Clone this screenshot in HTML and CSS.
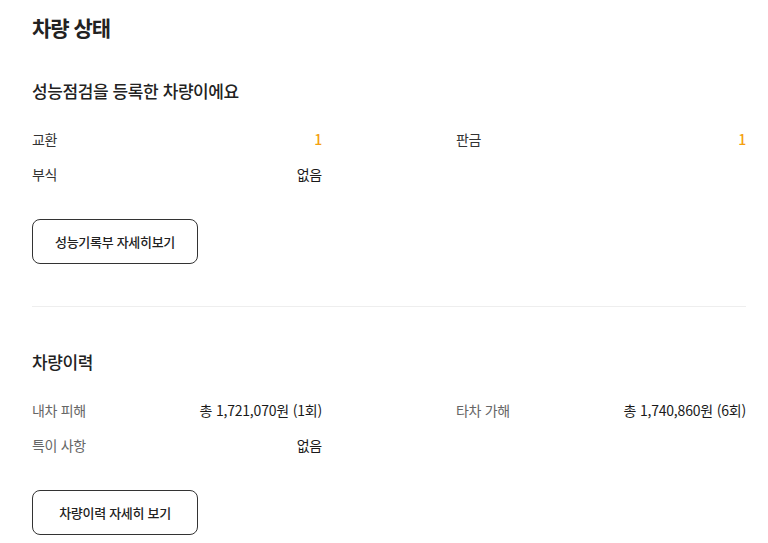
FILE: index.html
```html
<!DOCTYPE html>
<html lang="ko">
<head>
    <meta charset="UTF-8">
    <meta name="viewport" content="width=device-width, initial-scale=1.0">
    <title>차량 상태</title>
    <link rel="stylesheet" href="styles.css">
</head>
<body>
    <h1 class="page-title">차량 상태</h1>

    <section class="block">
        <h2 class="block-title">성능점검을 등록한 차량이에요</h2>
        <dl class="info-grid">
            <div class="info-row">
                <dt>교환</dt>
                <dd class="accent">1</dd>
            </div>
            <div class="info-row">
                <dt>판금</dt>
                <dd class="accent">1</dd>
            </div>
            <div class="info-row">
                <dt>부식</dt>
                <dd>없음</dd>
            </div>
        </dl>
        <button class="outline-btn">성능기록부 자세히보기</button>
    </section>

    <hr class="divider">

    <section class="block">
        <h2 class="block-title">차량이력</h2>
        <dl class="info-grid muted">
            <div class="info-row">
                <dt>내차 피해</dt>
                <dd>총 1,721,070원 (1회)</dd>
            </div>
            <div class="info-row">
                <dt>타차 가해</dt>
                <dd>총 1,740,860원 (6회)</dd>
            </div>
            <div class="info-row">
                <dt>특이 사항</dt>
                <dd>없음</dd>
            </div>
        </dl>
        <button class="outline-btn">차량이력 자세히 보기</button>
    </section>
</body>
</html>
```

FILE: styles.css
```css
body {
    font-family: "Noto Sans CJK KR", "Noto Sans", sans-serif;
    color: #222;
    margin: 0;
    padding: 11px 0 0 32px;
    width: 714px;
    background: #fff;
}
.page-title {
    font-size: 21px;
    font-weight: 700;
    line-height: 32px;
    margin: 0 0 35px;
    letter-spacing: -1px;
}
.block-title {
    font-size: 17px;
    font-weight: 500;
    line-height: 26px;
    margin: 0 0 25px;
    letter-spacing: -0.4px;
}
.info-grid {
    display: grid;
    grid-template-columns: 290px 290px;
    column-gap: 134px;
    row-gap: 14px;
    margin: 0 0 34px;
}
.info-row {
    display: flex;
    justify-content: space-between;
    font-size: 14px;
    line-height: 21px;
}
.info-row dt {
    color: #333;
    letter-spacing: -0.3px;
}
.info-row dd {
    margin: 0;
    color: #1a1a1a;
    letter-spacing: -0.2px;
}
.muted .info-row dt {
    color: #666;
}
.info-row .accent {
    color: #f5a00f;
    font-weight: 500;
}
.outline-btn {
    display: block;
    width: 166px;
    height: 45px;
    border: 1px solid #333;
    border-radius: 8px;
    background: #fff;
    font-family: inherit;
    font-size: 13px;
    font-weight: 500;
    color: #222;
    letter-spacing: -0.3px;
    cursor: pointer;
}
.divider {
    border: 0;
    border-top: 1px solid #eee;
    margin: 42px 0 42px;
}
```
